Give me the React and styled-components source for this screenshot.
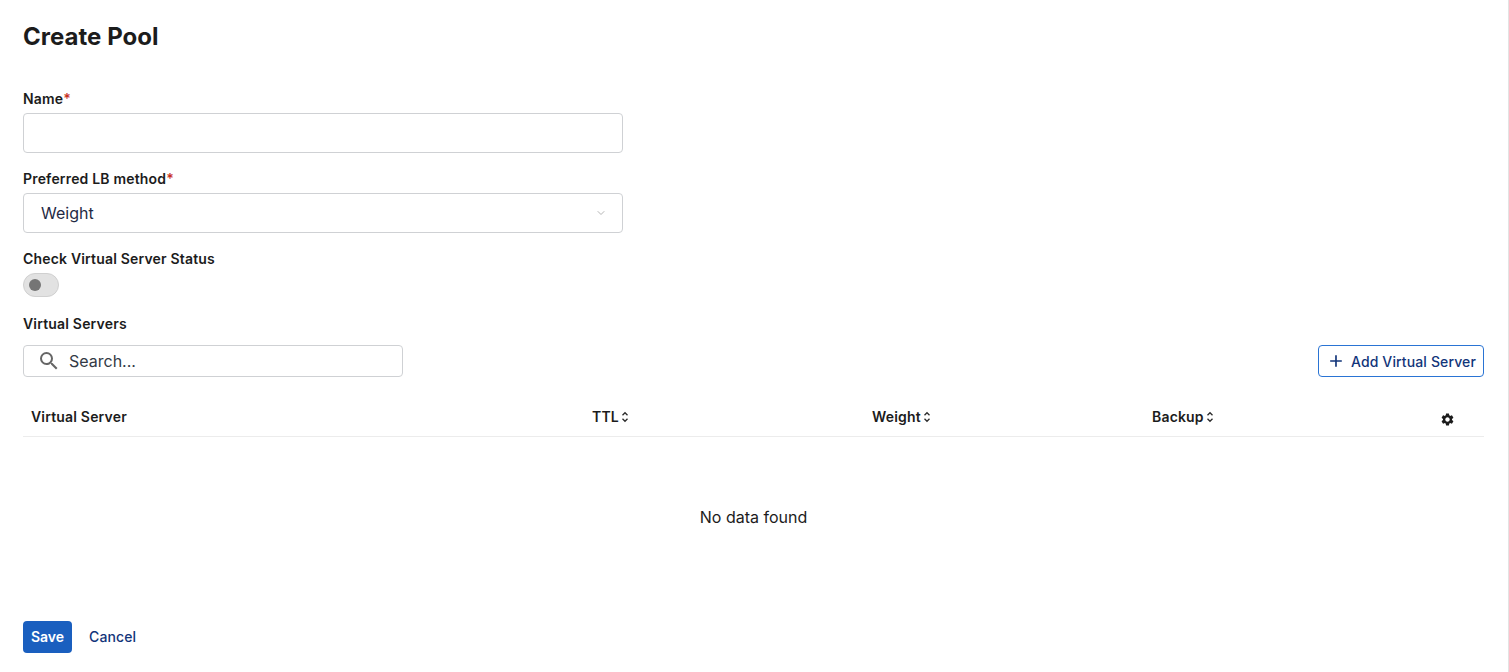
import React from "react";
import styled, { createGlobalStyle } from "styled-components";
import { ChevronDown } from "lucide-react";
import { MdSearch, MdAdd, MdSettings } from "react-icons/md";

const GlobalStyle = createGlobalStyle`
html, body {
  margin: 0;
  padding: 0;
  background: #fff;
  font-family: Inter, "Noto Sans", sans-serif;
  color: #1a1a1a;
}
* { box-sizing: border-box; }
`;

const Page = styled.div`
height: 672px;
width: 1509px;
display: flex;
overflow: hidden;
`;

const Main = styled.main`
flex: 1;
padding: 0 24px 0 23px;
display: flex;
flex-direction: column;
`;

const EdgeLine = styled.div`
width: 1px;
background: #e3e3e3;
`;

const Title = styled.h1`
margin: 0;
padding-top: 22px;
height: 91px;
font-size: 24px;
line-height: 30px;
font-weight: 700;
letter-spacing: 0.03px;
color: #1c1c1c;
`;

const Field = styled.div`
width: 600px;
margin-bottom: ${(p) => p.$gap || "18px"};
`;

const Label = styled.label`
display: block;
height: ${(p) => p.$height || "22px"};
font-size: 14px;
line-height: 16px;
font-weight: 600;
letter-spacing: 0.18px;
color: #1c1c1c;
`;

const Required = styled.span`
color: #c8321f;
`;

const TextInput = styled.div`
height: 40px;
border: 1px solid #cfd1d4;
border-radius: 4px;
background: #fff;
`;

const Select = styled(TextInput)`
display: flex;
align-items: center;
justify-content: space-between;
padding: 0 15px 0 17px;
font-size: 16px;
color: #1f2a44;
svg { color: #b5b5b5; }
`;

const Track = styled.div`
width: 36px;
height: 24px;
border: 1px solid #d0d0d0;
border-radius: 12px;
background: #e2e2e2;
display: flex;
align-items: center;
padding-left: 5px;
`;

const Knob = styled.span`
width: 12px;
height: 12px;
border-radius: 50%;
background: #757575;
`;

const Toolbar = styled.div`
display: flex;
justify-content: space-between;
align-items: center;
height: 32px;
`;

const SearchBox = styled.div`
width: 380px;
height: 32px;
border: 1px solid #cfd1d4;
border-radius: 4px;
display: flex;
align-items: center;
gap: 8px;
padding-left: 13px;
font-size: 16px;
color: #333a45;
svg { color: #666; }
`;

const AddButton = styled.button`
height: 32px;
width: 166px;
padding: 0 7px;
border: 1px solid #2a74d4;
border-radius: 4px;
background: #fff;
color: #12357a;
font: 500 14px Inter, sans-serif;
letter-spacing: 0.13px;
display: flex;
align-items: center;
gap: 5px;
white-space: nowrap;
`;

const Table = styled.div`
margin-top: 20px;
`;

const HeadRow = styled.div`
display: grid;
grid-template-columns: 561px 280px 280px 280px 1fr;
height: 40px;
align-items: center;
border-bottom: 1px solid #ececec;
font-size: 14px;
font-weight: 600;
letter-spacing: 0.18px;
color: #1c1c1c;
`;

const HeadCell = styled.div`
padding-left: 8px;
display: flex;
align-items: center;
gap: 2px;
`;

const SettingsCell = styled(HeadCell)`
padding: 6px 0 0 16px;
`;

const Empty = styled.div`
height: 161px;
display: flex;
align-items: center;
justify-content: center;
padding-bottom: 2px;
font-size: 16px;
color: #1c1c1c;
`;

const Actions = styled.div`
margin-top: 23px;
display: flex;
align-items: center;
gap: 17px;
`;

const SaveButton = styled.button`
width: 49px;
height: 32px;
border: 0;
border-radius: 4px;
background: #1a5fbf;
color: #fff;
font: 600 14px Inter, sans-serif;
padding: 0 0 1px;
`;

const CancelButton = styled.button`
border: 0;
background: none;
padding: 0 0 1px;
color: #12357a;
font: 500 14px Inter, sans-serif;
letter-spacing: 0.13px;
`;

function SortIcon() {
  return (
    <svg width="8" height="12" viewBox="0 0 8 12" fill="none" stroke="#2a2a2a" strokeWidth="1.3">
      <path d="M1.5 4.2 4 1.7l2.5 2.5" />
      <path d="M1.5 7.8 4 10.3l2.5-2.5" />
    </svg>
  );
}

const columns = [
  { name: "Virtual Server" },
  { name: "TTL", sortable: true },
  { name: "Weight", sortable: true },
  { name: "Backup", sortable: true },
];

export default function App() {
  return (
    <Page>
      <GlobalStyle />
      <Main>
        <Title>Create Pool</Title>
        <Field>
          <Label>Name<Required>*</Required></Label>
          <TextInput />
        </Field>
        <Field>
          <Label>Preferred LB method<Required>*</Required></Label>
          <Select>
            Weight
            <ChevronDown size={12} />
          </Select>
        </Field>
        <Field $gap="19px">
          <Label>Check Virtual Server Status</Label>
          <Track><Knob /></Track>
        </Field>
        <Label $height="29px">Virtual Servers</Label>
        <Toolbar>
          <SearchBox>
            <MdSearch size={24} />
            Search...
          </SearchBox>
          <AddButton>
            <MdAdd size={20} />
            Add Virtual Server
          </AddButton>
        </Toolbar>
        <Table>
          <HeadRow>
            {columns.map((c) => (
              <HeadCell key={c.name}>
                {c.name}
                {c.sortable && <SortIcon />}
              </HeadCell>
            ))}
            <SettingsCell>
              <MdSettings size={15} color="#1c1c1c" />
            </SettingsCell>
          </HeadRow>
          <Empty>No data found</Empty>
        </Table>
        <Actions>
          <SaveButton>Save</SaveButton>
          <CancelButton>Cancel</CancelButton>
        </Actions>
      </Main>
      <EdgeLine />
    </Page>
  );
}
